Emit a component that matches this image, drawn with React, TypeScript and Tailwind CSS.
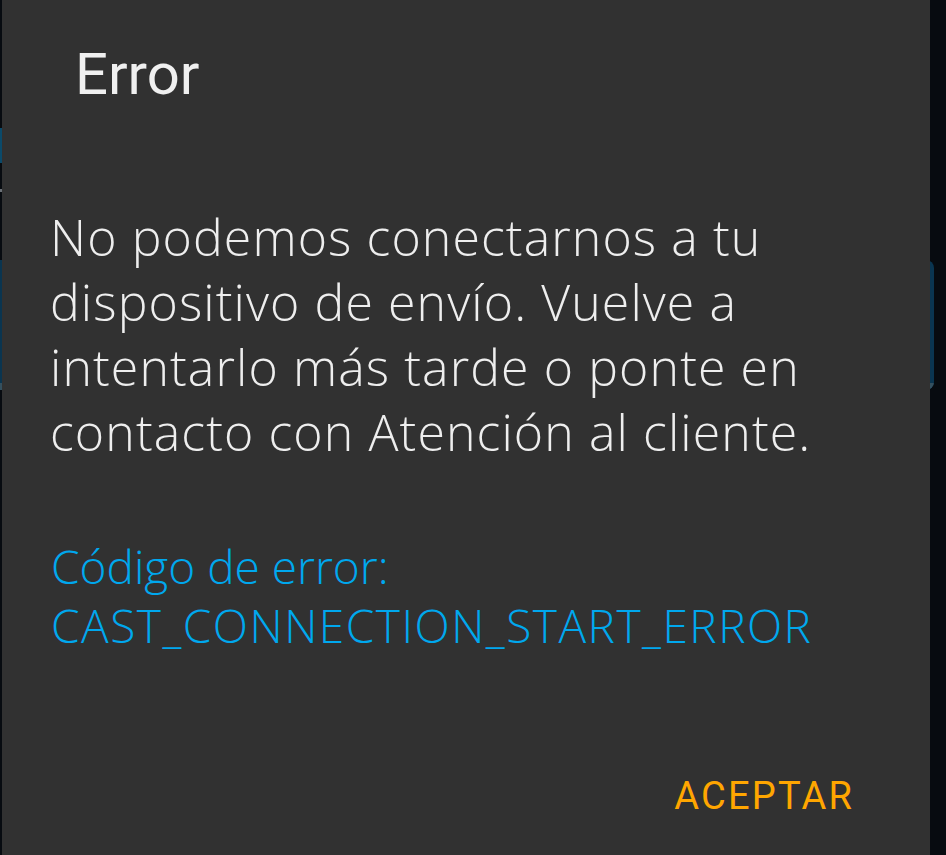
import React from "react";

export default function App() {
  return (
    <div className="relative h-[855px] w-[946px] overflow-hidden bg-[#070b10]">
      {/* background app peeking at the edges */}
      <div className="flex flex-col">
        <div className="mt-[128px] h-[35px] w-[300px] bg-[#0b4a6a]" />
        <div className="mt-[26px] h-[3px] w-[300px] bg-[#6b7177]" />
        <div className="mt-[68px] flex h-[130px] w-[934px] flex-col overflow-hidden rounded-r-[8px] bg-[#0a3550]">
          <div className="flex-1" />
          <div className="h-[7px] bg-[#34505f]" />
        </div>
      </div>

      {/* dialog */}
      <div className="absolute left-[2px] top-0 flex h-[855px] w-[928px] flex-col bg-[#313131] pl-[48px] pr-[76px]">
        <div
          className="ml-[25px] mt-[45px] text-[58px] leading-[58px] text-[#f0f0f0]"
          style={{ fontFamily: "Roboto, 'Open Sans', sans-serif" }}
        >
          Error
        </div>
        <div
          className="mt-[102px] text-[50px] font-light leading-[65px] tracking-[1.1px] text-[#eeeeee]"
          style={{ fontFamily: "'Open Sans', sans-serif" }}
        >
          No podemos conectarnos a tu
          <br />
          dispositivo de envío. Vuelve a
          <br />
          intentarlo más tarde o ponte en
          <br />
          contacto con Atención al cliente.
        </div>
        <div
          className="ml-[1px] mt-[72px] text-[46px] font-light leading-[59px] text-[#00a8ee]"
          style={{ fontFamily: "'Open Sans', sans-serif" }}
        >
          Código de error:
          <br />
          <span className="tracking-[1.5px]">CAST_CONNECTION_START_ERROR</span>
        </div>
        <div className="mt-[122px] flex justify-end">
          <div
            className="text-[38px] font-normal leading-[38px] tracking-[2.2px] text-[#ffa600]"
            style={{ fontFamily: "Roboto, sans-serif" }}
          >
            ACEPTAR
          </div>
        </div>
      </div>
    </div>
  );
}
